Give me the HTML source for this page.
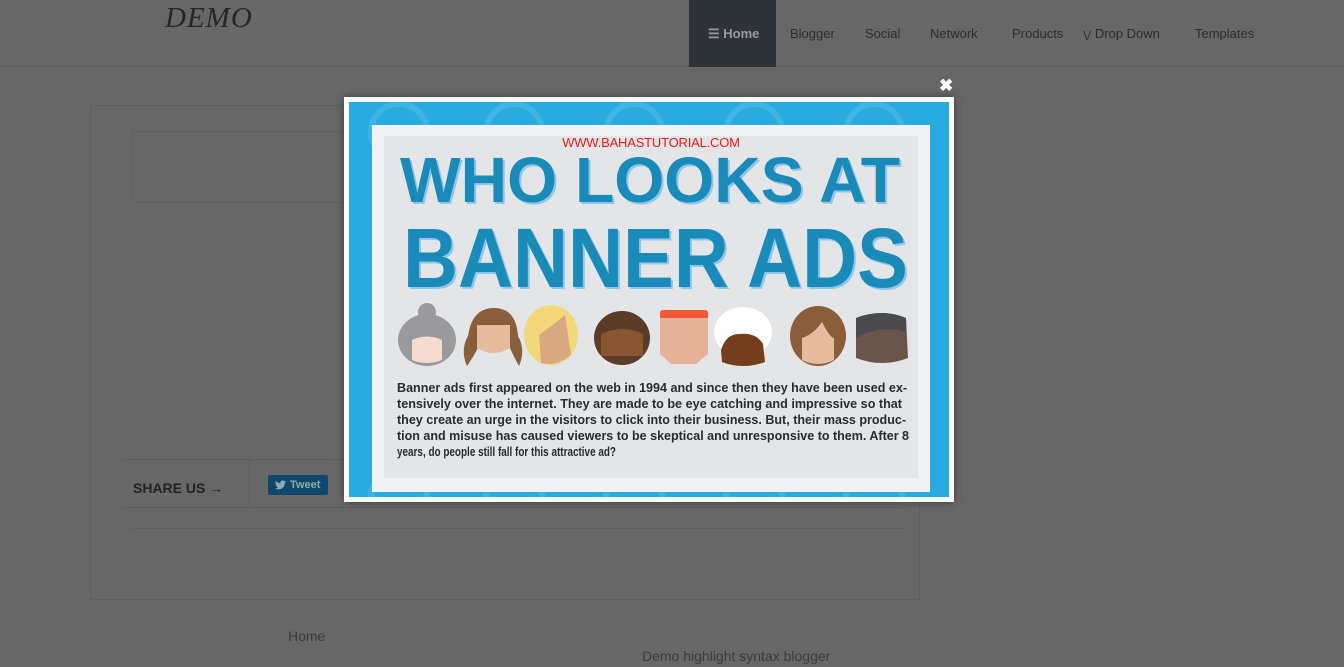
<!DOCTYPE html>
<html><head><meta charset="utf-8"><style>
*{margin:0;padding:0;box-sizing:border-box}
body{width:1344px;height:667px;overflow:hidden;background:#676767;font-family:"Liberation Sans",sans-serif;position:relative}
.abs{position:absolute}
.hdr{left:0;top:0;width:1344px;height:67px;border-bottom:1px solid #5f5f5f}
.logo{left:165px;top:2px;font-family:"Liberation Serif",serif;font-style:italic;font-size:29px;color:#262626;letter-spacing:1px}
.nav{top:0;height:67px;line-height:67px;font-size:13px;color:#2c2c2c}
.home{left:689px;top:0;width:87px;height:67px;background:#2e3239;color:#9a9a9a;font-weight:bold;font-size:13px;line-height:67px;padding-left:19px}
.box{left:90px;top:105px;width:830px;height:495px;border:1px solid #5f5f5f}
.inbox{left:132px;top:131px;width:220px;height:72px;border:1px solid #5f5f5f}
.share{left:133px;top:480px;font-size:14px;font-weight:bold;color:#222}
.tweet{left:268px;top:475px;width:60px;height:20px;background:#10486c;border-radius:2px;color:#8aa;font-size:11px;font-weight:bold;line-height:20px;padding-left:22px}
.line{background:#5e5e5e;height:1px}
.modal{left:344px;top:97px;width:610px;height:405px;background:#fff;box-shadow:0 0 8px rgba(0,0,0,.4)}
.blue{left:5px;top:5px;width:600px;height:395px;background:#29abe2;overflow:hidden}
.white{left:23px;top:23px;width:558px;height:367px;background:#f1f2f4}
.gray{left:12px;top:11px;width:534px;height:342px;background:#e4e5e7}
</style></head><body>
<div class="abs hdr"></div>
<div class="abs logo">DEMO</div>
<div class="abs home">&#9776; Home</div>
<div class="abs nav" style="left:790px">Blogger</div>
<div class="abs nav" style="left:865px">Social</div>
<div class="abs nav" style="left:930px">Network</div>
<div class="abs nav" style="left:1012px">Products</div>
<div class="abs nav" style="left:1083px"><span style="font-size:10px">&#8897;</span> Drop Down</div>
<div class="abs nav" style="left:1195px">Templates</div>
<div class="abs box"></div>
<div class="abs inbox"></div>
<div class="abs line" style="left:122px;top:459px;width:800px"></div>
<div class="abs line" style="left:122px;top:507px;width:780px"></div>
<div class="abs line" style="left:132px;top:528px;width:775px"></div>
<div class="abs" style="left:249px;top:459px;width:1px;height:48px;background:#5e5e5e"></div>
<div class="abs share">SHARE US &rarr;</div>
<div class="abs tweet"><svg class="abs" style="left:7px;top:5px" width="11" height="10" viewBox="0 0 24 20"><path fill="#8ab" d="M24 2.4a10 10 0 0 1-2.8.8A5 5 0 0 0 23.3.4a10 10 0 0 1-3.1 1.2A4.9 4.9 0 0 0 11.8 6 14 14 0 0 1 1.7.9a4.9 4.9 0 0 0 1.5 6.6A4.9 4.9 0 0 1 1 6.9a4.9 4.9 0 0 0 3.9 4.9 4.9 4.9 0 0 1-2.2.1 4.9 4.9 0 0 0 4.6 3.4A9.9 9.9 0 0 1 0 17.3 14 14 0 0 0 7.5 19.5c9 0 14-7.5 14-14v-.6A10 10 0 0 0 24 2.4z"/></svg>Tweet</div>
<div class="abs" style="left:288px;top:628px;font-size:14px;color:#3a3a3a">Home</div>
<div class="abs" style="left:642px;top:648px;font-size:14px;color:#3a3a3a">Demo highlight syntax blogger</div>
<div class="abs" style="left:939px;top:76px;color:#fff;font-size:17px;font-weight:bold">&#10006;</div>
<div class="abs modal">
 <div class="abs blue">
  <svg class="abs" style="left:0;top:0" width="600" height="395"><g fill="none" stroke="#4fbbe8" stroke-width="6" opacity=".6">
   <circle cx="50" cy="30" r="28"/><circle cx="165" cy="30" r="28"/><circle cx="285" cy="30" r="28"/><circle cx="405" cy="30" r="28"/><circle cx="525" cy="30" r="28"/>
   <circle cx="50" cy="395" r="28"/><circle cx="165" cy="395" r="28"/><circle cx="285" cy="395" r="28"/><circle cx="405" cy="395" r="28"/><circle cx="525" cy="395" r="28"/>
  </g></svg>
  <div class="abs white">
   <div class="abs gray">
    <div class="abs" style="left:0;top:-1px;width:534px;text-align:center;color:#e21b1b;font-size:13px;letter-spacing:-.2px">WWW.BAHASTUTORIAL.COM</div>
    <svg class="abs" style="left:0;top:0" width="534" height="342">
     <g font-family="Liberation Sans" font-weight="bold">
      <text x="18" y="68" font-size="64" textLength="500" lengthAdjust="spacingAndGlyphs" fill="#8fc7ec">WHO LOOKS AT</text>
      <text x="16" y="66" font-size="64" textLength="500" lengthAdjust="spacingAndGlyphs" fill="#1a8bb8">WHO LOOKS AT</text>
      <text x="21" y="153" font-size="84" textLength="505" lengthAdjust="spacingAndGlyphs" fill="#8fc7ec">BANNER ADS</text>
      <text x="19" y="151" font-size="84" textLength="505" lengthAdjust="spacingAndGlyphs" fill="#1a8bb8">BANNER ADS</text>
     </g>
     <g font-family="Liberation Sans" font-weight="bold" font-size="12.5" fill="#2b2b2b" lengthAdjust="spacingAndGlyphs">
      <text x="13" y="256" textLength="510" lengthAdjust="spacingAndGlyphs">Banner ads first appeared on the web in 1994 and since then they have been used ex-</text>
      <text x="13" y="272" textLength="505" lengthAdjust="spacingAndGlyphs">tensively over the internet. They are made to be eye catching and impressive so that</text>
      <text x="13" y="288" textLength="509" lengthAdjust="spacingAndGlyphs">they create an urge in the visitors to click into their business. But, their mass produc-</text>
      <text x="13" y="304" textLength="512" lengthAdjust="spacingAndGlyphs">tion and misuse has caused viewers to be skeptical and unresponsive to them. After 8</text>
      <text x="13" y="320" textLength="219" lengthAdjust="spacingAndGlyphs">years, do people still fall for this attractive ad?</text>
     </g>
    </svg>
    <svg class="abs" style="left:0;top:162px" width="534" height="75">
     <circle cx="43" cy="14" r="9" fill="#9a9a9c"/>
     <ellipse cx="43" cy="42" rx="29" ry="26" fill="#9a9a9c"/>
     <path d="M28 42 Q43 35 58 42 L58 62 Q43 68 28 62Z" fill="#f4dcd0"/>
     <path d="M83 68 Q76 52 84 38 Q88 10 110 10 Q132 10 134 38 Q142 52 135 68 Q126 52 123 42 L97 42 Q94 52 83 68Z" fill="#8a5e3a"/>
     <path d="M93 27 L126 27 L126 50 Q110 60 93 50Z" fill="#e6bba0"/>
     <ellipse cx="167" cy="37" rx="27" ry="30" fill="#f2d87a"/>
     <path d="M155 37 Q169 27 181 17 L187 57 Q172 69 157 65Z" fill="#d8a980"/>
     <ellipse cx="238" cy="40" rx="28" ry="27" fill="#5a3c28"/>
     <path d="M217 36 Q239 26 259 36 L259 58 L217 58Z" fill="#8a5532"/>
     <rect x="276" y="12" width="48" height="14" rx="3" fill="#f05a32"/>
     <path d="M276 20 L324 20 L324 56 L312 66 L287 66 L276 56Z" fill="#e6b199"/>
     <ellipse cx="359" cy="34" rx="29" ry="25" fill="#fff"/>
     <path d="M337 52 Q342 36 355 36 Q372 34 379 46 L381 64 Q359 72 338 64Z" fill="#743d1e"/>
     <ellipse cx="434" cy="38" rx="28" ry="30" fill="#8a5e3a"/>
     <path d="M418 40 Q430 36 438 24 Q446 40 450 40 L450 62 Q434 70 418 62Z" fill="#e6bba0"/>
     <path d="M472 20 Q498 10 522 20 L524 60 Q498 70 472 60Z" fill="#6a544c"/>
     <path d="M472 20 Q498 10 522 20 L522 34 Q498 26 472 40Z" fill="#4a4a4c"/>
    </svg>
   </div>
  </div>
 </div>
</div>
</body></html>
